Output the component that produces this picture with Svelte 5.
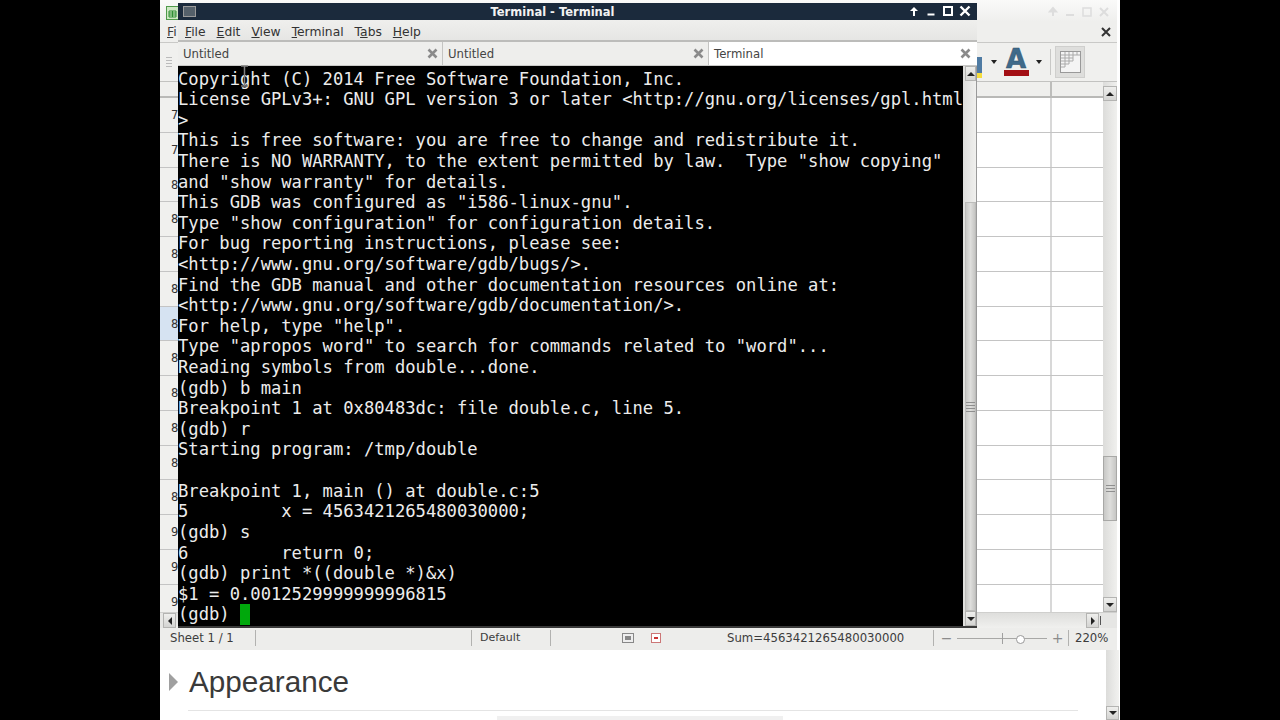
<script>
  const lines = [
    'Copyright (C) 2014 Free Software Foundation, Inc.',
    'License GPLv3+: GNU GPL version 3 or later <http://gnu.org/licenses/gpl.html',
    '>',
    'This is free software: you are free to change and redistribute it.',
    'There is NO WARRANTY, to the extent permitted by law.  Type "show copying"',
    'and "show warranty" for details.',
    'This GDB was configured as "i586-linux-gnu".',
    'Type "show configuration" for configuration details.',
    'For bug reporting instructions, please see:',
    '<http://www.gnu.org/software/gdb/bugs/>.',
    'Find the GDB manual and other documentation resources online at:',
    '<http://www.gnu.org/software/gdb/documentation/>.',
    'For help, type "help".',
    'Type "apropos word" to search for commands related to "word"...',
    'Reading symbols from double...done.',
    '(gdb) b main',
    'Breakpoint 1 at 0x80483dc: file double.c, line 5.',
    '(gdb) r',
    'Starting program: /tmp/double',
    ' ',
    'Breakpoint 1, main () at double.c:5',
    '5         x = 4563421265480030000;',
    '(gdb) s',
    '6         return 0;',
    '(gdb) print *((double *)&x)',
    '$1 = 0.0012529999999996815'
  ];
  const rows = ['7', '7', '8', '8', '8', '8', '8', '8', '8', '8', '8', '8', '9', '9', '9'];
  const tabs = ['Untitled', 'Untitled', 'Terminal'];
</script>

<div class="screen">
  <div class="page">
    <section class="sheet">
      <header class="s-title">
        <svg class="app-icon" width="13" height="14" viewBox="0 0 13 14">
          <rect x=".5" y=".5" width="12" height="13" fill="#cfe8c4" stroke="#4f9a4a" />
          <path d="M3 5h7v6H3zM3 7h7M3 9h7M6.5 5v6" fill="none" stroke="#2f8f35" />
        </svg>
        <div class="faint">
          <svg width="12" height="12" viewBox="0 0 12 12"><path d="M6 10V4M3 5.5 6 2l3 3.5z" fill="#ddd" stroke="#ddd" stroke-width="2" /></svg>
          <svg width="12" height="12" viewBox="0 0 12 12"><path d="M2 9h8" stroke="#ddd" stroke-width="2" /></svg>
          <svg width="12" height="12" viewBox="0 0 12 12"><rect x="2" y="2" width="8" height="8" fill="none" stroke="#ddd" stroke-width="1.5" /></svg>
          <svg width="12" height="12" viewBox="0 0 12 12"><path d="M2 2l8 8M10 2l-8 8" stroke="#ddd" stroke-width="2" /></svg>
        </div>
      </header>
      <nav class="s-menu">
        <span class="fi"><u>F</u>i</span>
        <svg width="10" height="10" viewBox="0 0 10 10"><path d="M1 1l8 8M9 1 1 9" stroke="#333" stroke-width="2" /></svg>
      </nav>
      <div class="s-tools">
        <div class="grip"><i></i><i></i><i></i><i></i></div>
        <div class="tool-right">
          <div class="hilite"></div>
          <span class="drop first"></span>
          <div class="font-color"><span>A</span><i></i></div>
          <span class="drop"></span>
          <span class="vsep"></span>
          <div class="table-btn">
            <svg width="21" height="22" viewBox="0 0 21 22">
              <rect x=".5" y=".5" width="20" height="21" fill="#f4f4f4" stroke="#999" />
              <path d="M1 4h19M1 7h12M1 10h12M1 13h8M1 16h4M5 1v15M9 1v12M13 1v9M17 1v3" stroke="#aaa" fill="none" />
            </svg>
          </div>
        </div>
      </div>
      <div class="s-grid">
        <div class="cells">
          <div class="row colhead"><span></span><span></span><span></span></div>
          {#each rows as r, i}
            <div class="row" class:sel={i === 6}>
              <span class="rh">{r}</span><span></span><span></span>
            </div>
          {/each}
        </div>
        <div class="vscroll">
          <div class="btn"><b class="up"></b></div>
          <div class="track"></div>
          <div class="thumb"><i></i><i></i><i></i></div>
          <div class="track short"></div>
          <div class="btn"><b class="down"></b></div>
        </div>
      </div>
      <div class="hscroll">
        <div class="btn first"><b class="left"></b></div>
        <div class="track"></div>
        <div class="btn"><b class="right"></b></div>
        <span class="tick"></span>
      </div>
      <footer class="status">
        <span class="st a">Sheet 1 / 1</span>
        <span class="st b"></span>
        <span class="st c">Default</span>
        <span class="st d">
          <svg width="12" height="10" viewBox="0 0 12 10"><rect x=".5" y=".5" width="11" height="9" fill="#eee" stroke="#888" /><path d="M3 3h6v4H3z" fill="#888" /></svg>
          <svg width="12" height="12" viewBox="0 0 12 12"><rect x="1.5" y="1.5" width="9" height="9" fill="#fff" stroke="#c77" /><path d="M4 6h4" stroke="#c33" stroke-width="2" /></svg>
        </span>
        <span class="st e">Sum=4563421265480030000</span>
        <span class="zoom">
          <em>−</em>
          <span class="slider"><i class="mid"></i><i class="knob"></i></span>
          <em>+</em>
        </span>
        <span class="pct">220%</span>
      </footer>
    </section>

    <section class="below">
      <div class="content">
        <h2><span class="tri"></span>Appearance</h2>
        <div class="rule"></div>
        <div class="strip"></div>
      </div>
      <div class="pagebar">
        <div class="track"></div>
        <div class="btn"><b class="down"></b></div>
      </div>
    </section>

    <div class="term">
      <header class="t-title">
        <span class="t-icon"></span>
        <strong>Terminal - Terminal</strong>
        <div class="t-btns">
          <svg width="12" height="12" viewBox="0 0 12 12"><path d="M6 11V5" stroke="#fff" stroke-width="2" /><path d="M2 6l4-4 4 4z" fill="#fff" /></svg>
          <svg width="12" height="12" viewBox="0 0 12 12"><path d="M2.5 9.5h7" stroke="#fff" stroke-width="2" /></svg>
          <svg width="12" height="12" viewBox="0 0 12 12"><rect x="2" y="2" width="8" height="8" fill="none" stroke="#fff" stroke-width="2" /></svg>
          <svg width="12" height="12" viewBox="0 0 12 12"><path d="M1.5 1.5l9 9M10.5 1.5l-9 9" stroke="#fff" stroke-width="2.4" /></svg>
        </div>
      </header>
      <nav class="t-menu">
        <span><u>F</u>ile</span><span><u>E</u>dit</span><span><u>V</u>iew</span><span><u>T</u>erminal</span><span>T<u>a</u>bs</span><span><u>H</u>elp</span>
      </nav>
      <div class="t-tabs">
        {#each tabs as t, i}
          <div class="tab" class:active={i === 2}>
            <span>{t}</span>
            <svg width="11" height="11" viewBox="0 0 11 11"><path d="M1.5 1.5l8 8M9.5 1.5l-8 8" stroke="#8a8a8a" stroke-width="2.6" /></svg>
          </div>
        {/each}
      </div>
      <div class="t-body">
        <div class="output">
          {#each lines as l}<div class="ln">{l}</div>{/each}
          <div class="ln">(gdb) <span class="cursor"></span></div>
        </div>
        <div class="t-scroll">
          <div class="btn"><b class="up"></b></div>
          <div class="track"></div>
          <div class="thumb"><i></i><i></i><i></i><i></i></div>
          <div class="btn"><b class="down"></b></div>
        </div>
      </div>
    </div>

    <svg class="ibeam" width="9" height="22" viewBox="0 0 9 22">
      <path d="M1 1h7M4.500 1v20M1 21h7" fill="none" stroke="#808080" stroke-width="1.500" />
    </svg>
  </div>
</div>

<style>
  :global(body) { margin: 0; background: #000; }
  .screen { width: 1280px; height: 720px; background: #000; display: flex; justify-content: center; overflow: hidden; }
  .page { width: 960px; height: 720px; background: #fff; position: relative; overflow: hidden; display: flex; flex-direction: column; font-family: "DejaVu Sans", sans-serif; color: #3c3c3c; }

  .sheet { height: 650px; width: 957px; display: flex; flex-direction: column; background: #eeeeec; flex: none; }
  .s-title { height: 22px; flex: none; display: flex; align-items: center; justify-content: space-between; background: linear-gradient(#fafaf9, #efefed); padding: 2px 0 0 6px; box-sizing: border-box; }
  .app-icon { margin-top: 2px; }
  .faint { display: flex; gap: 5px; padding-right: 7px; }
  .s-menu { height: 21px; flex: none; display: flex; align-items: center; justify-content: space-between; padding: 0 6px 1px 7px; font-size: 12.500px; background: #efefed; border-bottom: 1px solid #c9c9c7; box-sizing: border-box; }
  .s-tools { height: 39px; flex: none; display: flex; justify-content: space-between; align-items: center; background: #f0f0ee; border-bottom: 1px solid #c2c2c0; box-sizing: border-box; padding-left: 6px; }
  .grip { display: flex; flex-direction: column; gap: 2px; width: 6px; }
  .grip i { display: block; height: 1px; background: #bbb; }
  .tool-right { display: flex; align-items: center; padding-right: 32px; }
  .hilite { width: 6px; height: 21px; margin-top: 10px; background: linear-gradient(#4f7ba3 0 76%, #f5dc3c 76%); margin-right: 9px; }
  .drop { width: 0; height: 0; border: 3px solid transparent; border-top: 4px solid #222; border-bottom: 0; margin-right: 7px; }
  .drop.first { margin-right: 6px; }
  .font-color { width: 26px; margin-right: 7px; display: flex; flex-direction: column; align-items: center; }
  .font-color span { font: bold 26px/21px "DejaVu Sans", sans-serif; color: #3f6a8a; height: 21px; -webkit-text-stroke: .5px #2f4f6a; }
  .font-color i { display: block; width: 25px; height: 6px; background: #a30f14; }
  .vsep { width: 1px; height: 26px; background: #c8c8c6; margin-right: 4px; margin-left: 1px; }
  .table-btn { width: 30px; height: 32px; background: #dededc; border: 1px solid #cfcfcd; box-sizing: border-box; display: flex; align-items: center; justify-content: center; }

  .s-grid { flex: 1; min-height: 0; display: flex; background: #fff; }
  .cells { flex: 1; min-width: 0; overflow: hidden; }
  .row { height: 34.750px; display: grid; grid-template-columns: 18px 1fr 51px; box-sizing: border-box; border-bottom: 1px solid #c4c4c4; }
  .row span:nth-child(2) { border-right: 2px solid #d8d8d8; }
  .row.colhead { height: 16px; background: #efefed; border-bottom: 2px solid #b9b9b7; }
  .colhead span:nth-child(2) { border-right-color: #bdbdbb; }
  .rh { background: #f0f0ee; font-size: 11.500px; padding-left: 11px; box-sizing: border-box; overflow: hidden; line-height: 34px; color: #333; }
  .row.sel .rh { background: #d6e3f2; }

  .vscroll { width: 14px; flex: none; display: flex; flex-direction: column; padding-top: 4px; box-sizing: border-box; background: linear-gradient(90deg, #dcdcda, #f0f0ee); }
  .vscroll .track { height: 355px; flex: none; }
  .vscroll .track.short { height: auto; flex: 1; }
  .btn { height: 15px; flex: none; background: linear-gradient(#efefed, #d4d4d2); border: 1px solid #b4b4b2; box-sizing: border-box; display: flex; align-items: center; justify-content: center; }
  .thumb { background: linear-gradient(90deg, #c8c8c6, #dededc 50%, #c6c6c4); border: 1px solid #a8a8a6; box-sizing: border-box; display: flex; flex-direction: column; gap: 2px; align-items: center; justify-content: center; }
  .thumb i { display: block; width: 9px; height: 1px; background: #8f8f8f; }
  .vscroll .thumb { height: 65px; flex: none; }
  b { display: block; width: 0; height: 0; border: 4px solid transparent; }
  b.up { border-top: 0; border-bottom: 4px solid #222; }
  b.down { border-bottom: 0; border-top: 4px solid #222; }
  b.left { border-left: 0; border-right: 4px solid #222; }
  b.right { border-right: 0; border-left: 4px solid #222; }

  .hscroll { height: 16px; flex: none; display: flex; align-items: stretch; padding-left: 3px; background: #e6e6e4; border-top: 1px solid #cfcfcd; box-sizing: border-box; }
  .hscroll .btn { width: 13px; height: auto; }
  .hscroll .track { flex: 1; background: linear-gradient(#dededc, #f0f0ee); }
  .hscroll .tick { width: 1px; margin: 3px 16px 3px 1px; background: #555; }

  .status { height: 22px; flex: none; display: flex; align-items: center; font-size: 11.700px; background: #ededeb; color: #3c3c3c; padding-bottom: 2px; box-sizing: border-box; }
  .st { height: 16px; line-height: 16px; box-sizing: border-box; border-right: 1px solid #b2b2b0; flex: none; }
  .st.a { width: 96px; padding-left: 10px; }
  .st.b { width: 216px; }
  .st.c { width: 79px; padding-left: 8px; font-size: 11px; }
  .st.d { width: 176px; padding-left: 71px; display: flex; align-items: center; gap: 16px; border-right: 0; }
  .st.e { width: 207px; padding-left: 0; }
  .zoom { display: flex; align-items: center; flex: none; width: 135px; padding-left: 8px; box-sizing: border-box; gap: 6px; height: 16px; border-right: 1px solid #b2b2b0; color: #8c8c8c; }
  .zoom em { font: normal 14px/16px "DejaVu Sans", sans-serif; width: 9px; text-align: center; display: flex; justify-content: center; }
  .slider { position: relative; width: 90px; height: 1px; background: #a8a8a6; display: block; flex: none; }
  .slider i { position: absolute; display: block; }
  .mid { left: 45px; top: -5px; width: 1px; height: 11px; background: #a0a0a0; }
  .knob { left: 59px; top: -3px; width: 7px; height: 7px; border-radius: 50%; background: #fff; border: 1px solid #999; }
  .pct { padding-left: 6px; flex: none; font-size: 11.700px; }

  .below { flex: 1; display: flex; min-height: 0; background: #fff; }
  .content { flex: 1; min-width: 0; display: flex; flex-direction: column; align-items: flex-start; }
  h2 { margin: 14px 0 0; font: 400 29.700px/36px "Liberation Sans", Arial, sans-serif; color: #3a3a3a; display: flex; align-items: center; padding-left: 9px; }
  .tri { width: 0; height: 0; border-left: 9px solid #a0a0a0; border-top: 9px solid transparent; border-bottom: 9px solid transparent; margin-right: 11px; }
  .rule { height: 1px; background: #e4e4e4; width: 890px; margin: 10px 0 0 28px; flex: none; }
  .strip { width: 286px; height: 4px; background: #f0f0f0; margin: 5px 0 0 337px; flex: none; }
  .pagebar { width: 13px; margin-right: 1px; flex: none; display: flex; flex-direction: column; background: linear-gradient(90deg, #dcdcda, #f2f2f0); }
  .pagebar .track { flex: 1; }
  .pagebar .btn { height: 14px; }

  .term { position: absolute; left: 18px; top: 3px; width: 799px; height: 625px; display: flex; flex-direction: column; background: #eeeeec; border-bottom: 2px solid #3a3a3a; box-sizing: border-box; }
  .t-title { height: 17px; flex: none; background: #1b2a3c; position: relative; display: flex; align-items: center; justify-content: center; color: #f2f2f2; font-size: 11.500px; }
  .t-title strong { font-weight: 700; position: relative; left: -25px; }
  .t-icon { position: absolute; left: 5px; top: 3px; width: 13px; height: 11px; border: 1px solid #9a9a9a; background: #55606a; box-sizing: border-box; }
  .t-btns { position: absolute; right: 6px; top: 2px; display: flex; gap: 5px; }
  .t-menu { height: 22px; flex: none; display: flex; align-items: center; padding: 3px 0 0 7px; gap: 11px; font-size: 12.300px; background: linear-gradient(#efefed, #e6e6e4); border-bottom: 2px solid #bcbcba; box-sizing: border-box; color: #333; }
  .t-tabs { height: 24px; flex: none; display: grid; grid-template-columns: 265px 266px 1fr; border-bottom: 1px solid #c9c9c7; box-sizing: border-box; }
  .tab { display: flex; align-items: center; justify-content: space-between; padding: 0 4px 0 5px; font-size: 11.700px; background: #eeeeec; border-right: 1px solid #c4c4c2; color: #444; }
  .tab.active { background: #fff; border-right: 0; padding-right: 6px; }
  .t-body { flex: 1; min-height: 0; display: flex; background: #000; }
  .output { flex: 1; min-width: 0; overflow: hidden; font: 17.170px/20.615px "DejaVu Sans Mono", monospace; color: #ececec; padding-top: 2.500px; box-sizing: border-box; }
  .ln { height: 20.615px; white-space: pre; }
  .cursor { display: inline-block; width: 10.300px; height: 20.600px; vertical-align: top; background: #00a80c; }
  .t-scroll { width: 14px; flex: none; display: flex; flex-direction: column; box-sizing: border-box; border-right: 1px solid #9a9a9a; background: linear-gradient(90deg, #dededc, #f0f0ee); }
  .t-scroll .btn { height: 15px; margin-left: 2px; }
  .t-scroll .track { height: 121px; flex: none; }
  .t-scroll .thumb { flex: 1; margin-left: 2px; border-color: #bcbcba; }

  .ibeam { position: absolute; left: 80px; top: 65px; }
</style>
